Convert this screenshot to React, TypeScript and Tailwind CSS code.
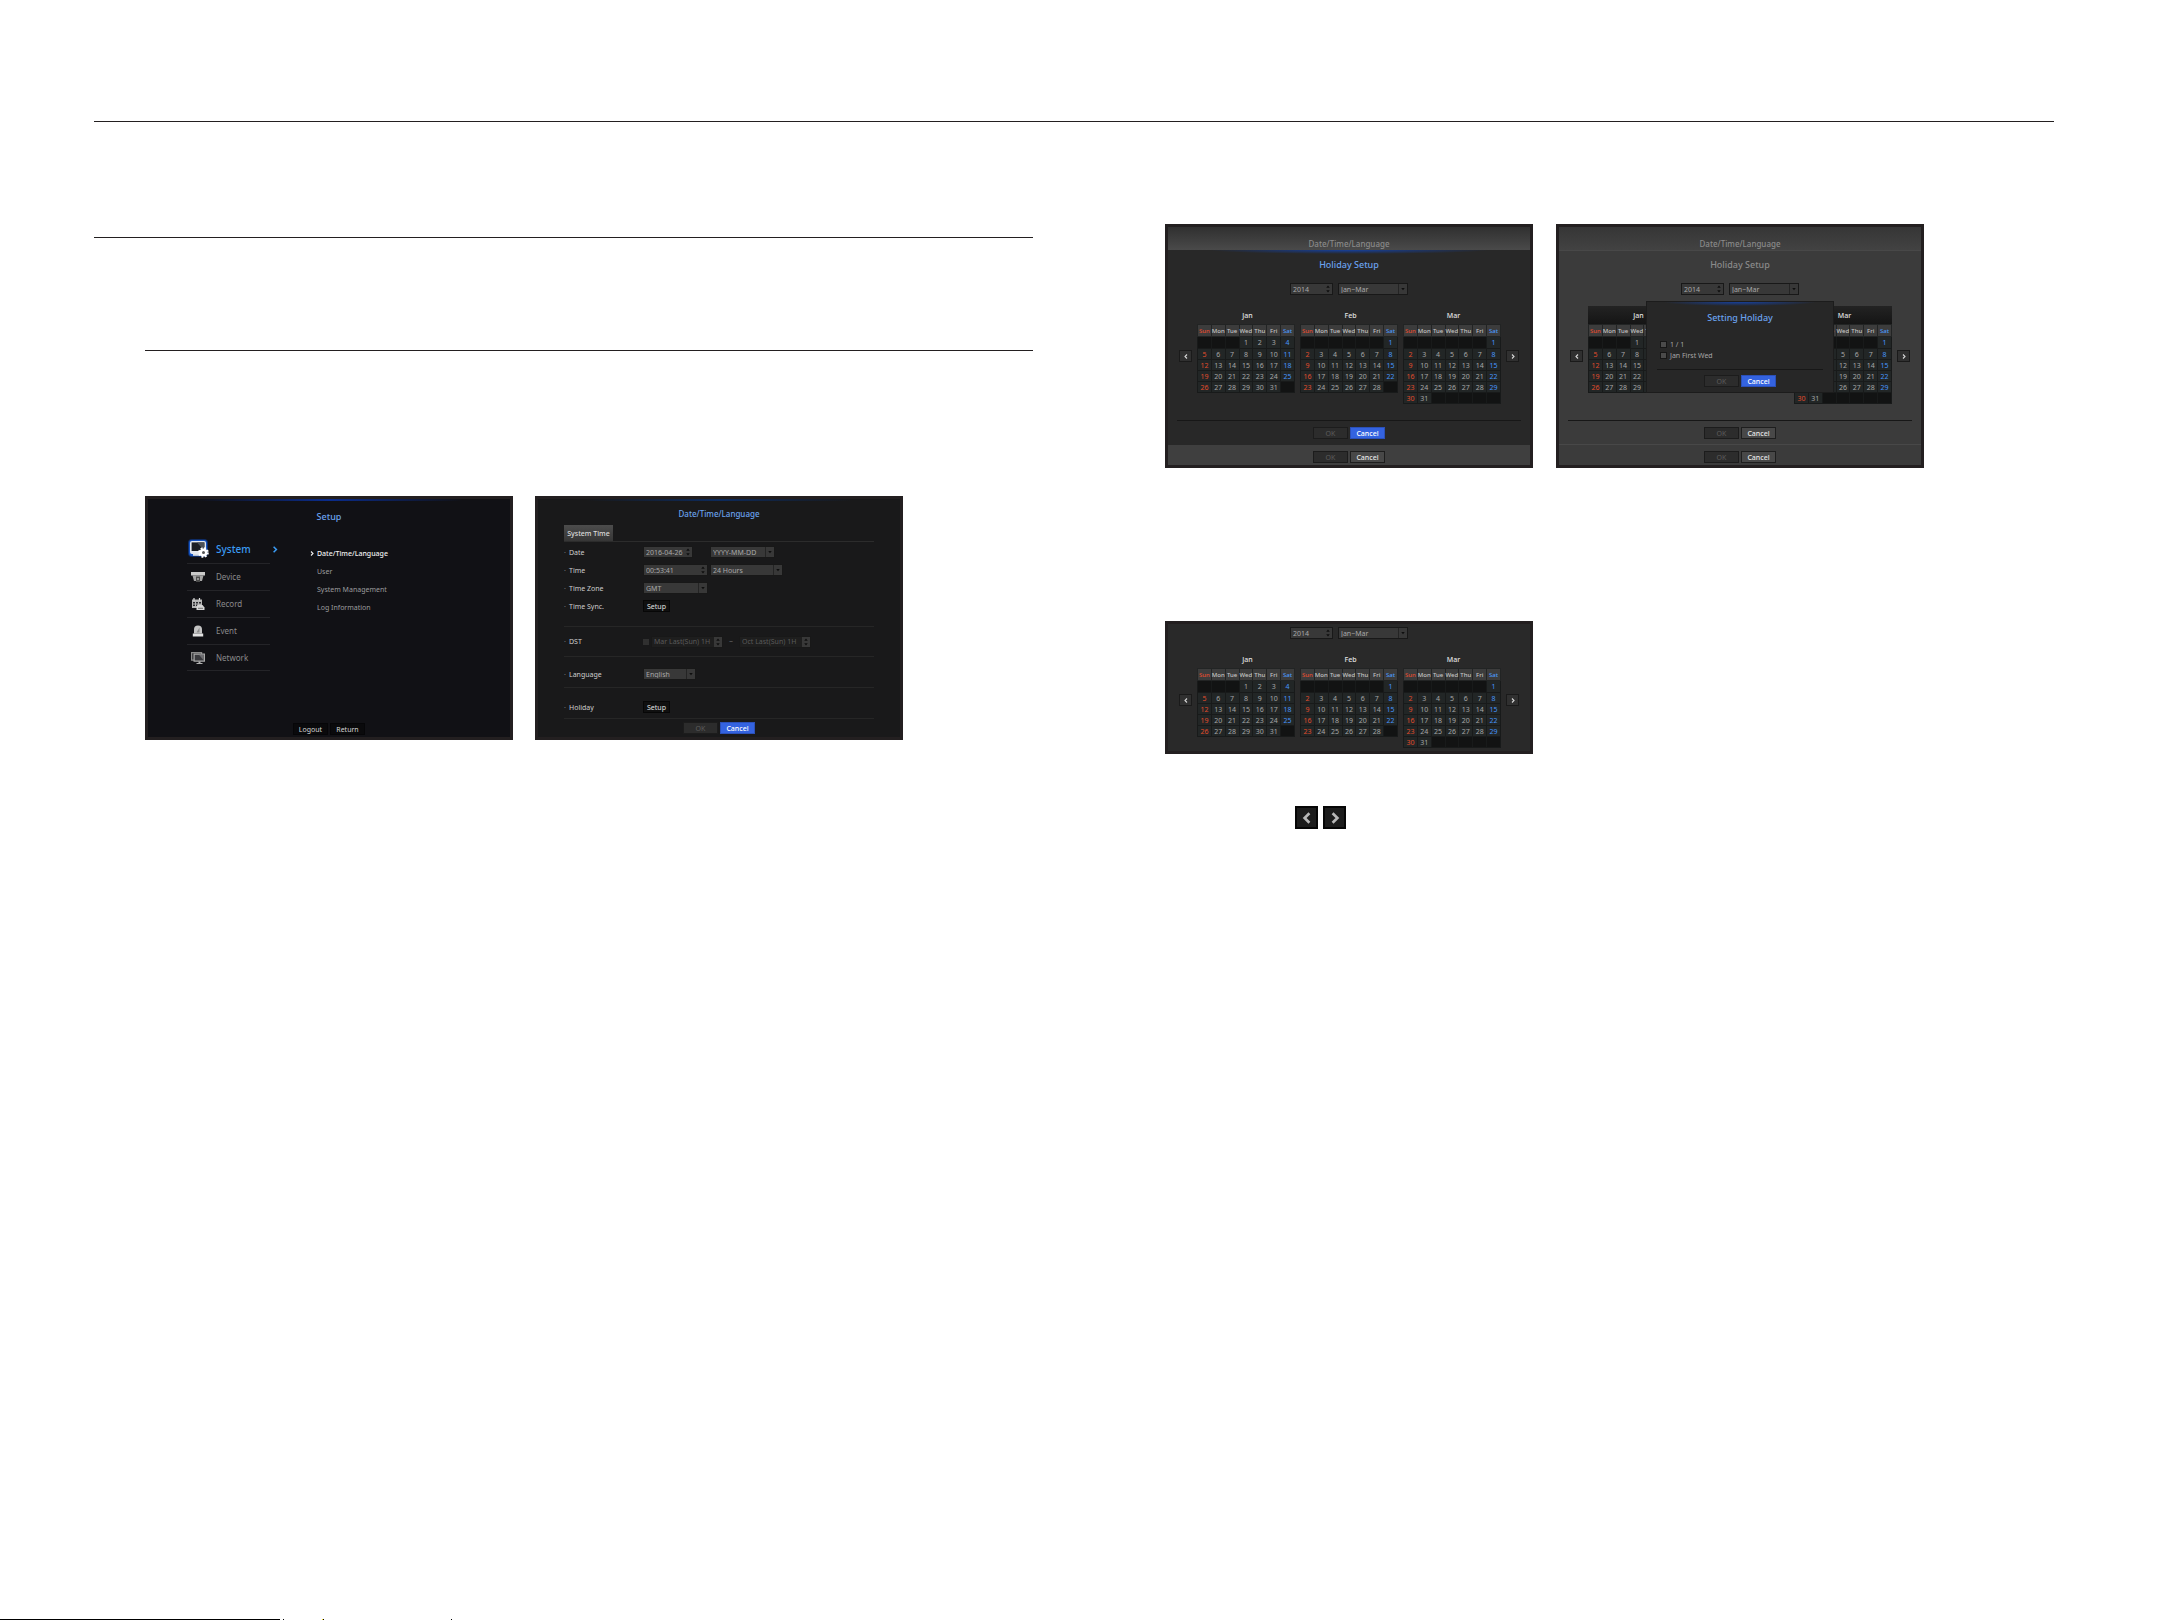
import { useId } from "react";
import type { ReactNode } from "react";
import clsx from "clsx";

const DAYS = ["Sun", "Mon", "Tue", "Wed", "Thu", "Fri", "Sat"];

const MONTHS = [
  { name: "Jan", start: 3, length: 31 },
  { name: "Feb", start: 6, length: 28 },
  { name: "Mar", start: 6, length: 31 },
];

function weeksOf(start: number, length: number): (number | null)[][] {
  const rows = Math.ceil((start + length) / 7);
  return Array.from({ length: rows }, (_, row) =>
    Array.from({ length: 7 }, (_, col) => {
      const day = row * 7 + col - start + 1;
      return day >= 1 && day <= length ? day : null;
    }),
  );
}

function Chevron({ left = false, className }: { left?: boolean; className?: string }) {
  return (
    <svg viewBox="0 0 8 10" className={className} fill="none" stroke="currentColor" strokeWidth="2.2" aria-hidden="true">
      <path d={left ? "M6 1 2 5l4 4" : "M2 1l4 4-4 4"} />
    </svg>
  );
}

function Rule({ className }: { className?: string }) {
  return <hr className={clsx("h-px border-0 bg-[#231f20]", className)} />;
}

function Panel({ label, className, children }: { label: string; className?: string; children: ReactNode }) {
  return (
    <section
      aria-label={label}
      className={clsx("flex w-[368px] flex-col overflow-hidden border-3 border-[#231f20] text-[7px] leading-none", className)}
    >
      {children}
    </section>
  );
}

function SmallButton({ tone = "dark", children }: { tone?: "dark" | "off" | "blue" | "gray"; children: ReactNode }) {
  return (
    <button
      type="button"
      className={clsx(
        "flex h-3 w-[35px] items-center justify-center border text-[7px] leading-none",
        tone === "dark" && "border-[#060608] bg-[#0a0a0c] text-[#d4d4d4]",
        tone === "off" && "border-[#1c1c1c] bg-[#2c2c2c] text-[#5c5c5c]",
        tone === "blue" && "border-[#2b50b8] bg-[#3463e0] font-medium text-white",
        tone === "gray" && "border-[#1e1e1e] bg-[#484848] font-medium text-[#e6e6e6]",
      )}
    >
      {children}
    </button>
  );
}

function SpinField({ label, value, className, disabled = false }: { label: string; value: string; className: string; disabled?: boolean }) {
  return (
    <div
      className={clsx(
        "flex h-3 items-center border border-[#181818] pl-0.5",
        disabled ? "bg-[#1e1e1e] text-[#5a5a5a]" : "bg-[#383838] text-[#a8a8a8]",
        className,
      )}
    >
      <input
        aria-label={label}
        defaultValue={value}
        disabled={disabled}
        className="h-full w-0 min-w-0 flex-1 bg-transparent text-[7px] leading-none outline-none"
      />
      <svg viewBox="0 0 9 11" className={clsx("h-full w-2", disabled && "bg-[#383838]")} fill="#0e0e0e" aria-hidden="true">
        <path d="M2.500 4 4.500 1.500 6.500 4zM2.500 7h4L4.500 9.500z" />
      </svg>
    </div>
  );
}

function SelectField({ id, label, value, className }: { id?: string; label: string; value: string; className: string }) {
  return (
    <div className={clsx("relative h-3 border border-[#181818] bg-[#383838] text-[#a8a8a8]", className)}>
      <select id={id} aria-label={label} className="block h-full w-full appearance-none bg-transparent pl-0.5 text-[7px] leading-none outline-none">
        <option>{value}</option>
      </select>
      <svg viewBox="0 0 9 10" className="pointer-events-none absolute inset-y-0 right-0 h-full w-[9px] border-l border-[#242424]" fill="#0e0e0e" aria-hidden="true">
        <path d="M2.500 4h4L4.500 6.500z" />
      </svg>
    </div>
  );
}

function Title({ dim = false, small = false, className, children }: { dim?: boolean; small?: boolean; className?: string; children: ReactNode }) {
  return (
    <h2
      className={clsx(
        "text-center leading-3 font-medium",
        small ? "text-[8px]" : "text-[9px]",
        dim ? "text-[#8a8a8a]" : "text-[#6aa2ee]",
        className,
      )}
    >
      {children}
    </h2>
  );
}

/* ---------- Setup menu ---------- */

function SystemIcon() {
  return (
    <svg viewBox="0 0 24 22" className="h-[22px] w-6" aria-hidden="true">
      <rect x="1" y="1" width="20" height="18" rx="4" fill="#0d3f9c" opacity="0.600" />
      <rect x="2" y="2" width="18" height="16" rx="3" fill="#1554c4" />
      <rect x="3" y="3" width="16" height="13" rx="2" fill="#e4e8ee" />
      <rect x="4.600" y="4.400" width="12.800" height="8.600" fill="#1b1e22" />
      <path d="M10 4.400h7.400V13z" fill="#4c5158" />
      <path d="M6 16h9v1.800H6z" fill="#d9dde2" />
      <circle cx="16.500" cy="14.500" r="4.300" fill="none" stroke="#fff" strokeWidth="2" strokeDasharray="1.900 1.480" />
      <circle cx="16.500" cy="14.500" r="2.700" fill="#555" stroke="#fff" strokeWidth="2.400" />
    </svg>
  );
}

function DeviceIcon() {
  return (
    <svg viewBox="0 0 14 12" className="h-3 w-[14px]" aria-hidden="true">
      <path d="M0 1h14v3.500H0z" fill="#c9c9c9" />
      <path d="M1.500 4.500h11L11 10H9V7H5v3H3z" fill="#a4a4a4" />
      <path d="M5 5.500h4V11H5z" fill="#4a4a4a" />
      <path d="M6.500 7h1v2h-1z" fill="#ddd" />
    </svg>
  );
}

function RecordIcon() {
  return (
    <svg viewBox="0 0 14 12" className="h-3 w-[14px]" aria-hidden="true">
      <path d="M1 1.500h10V10H1z" fill="#b5b5b5" />
      <path d="M3 0v2.500M8.500 0v2.500" stroke="#ddd" strokeWidth="1.200" />
      <path d="M2 4h2v1.500H2zM5 4h2v1.500H5zM8 4h2v1.500H8zM2 6.500h2V8H2zM5 6.500h1.500V8H5z" fill="#2c2c30" />
      <path d="M6.500 7h5l2 2.500V12H5.500V9z" fill="#d6d6d6" />
      <path d="M7 10.300h5" stroke="#555" strokeWidth="0.800" />
    </svg>
  );
}

function EventIcon() {
  return (
    <svg viewBox="0 0 14 12" className="h-3 w-[14px]" aria-hidden="true">
      <path d="M3 8.500V4.500a4 4 0 0 1 8 0v4z" fill="#c4c4c4" />
      <path d="M5.500 7.500 8.500 2.500v5z" fill="#8c8c8c" />
      <path d="M1.800 8.500h10.400v3H1.800z" fill="#e2e2e2" />
    </svg>
  );
}

function NetworkIcon() {
  return (
    <svg viewBox="0 0 14 12" className="h-3 w-[14px]" aria-hidden="true">
      <path d="M.6.600h10v7.500H.6z" fill="#2c2c30" stroke="#8a8a8a" strokeWidth="1.200" />
      <path d="M3.100 2.100h10.300v7H3.100z" fill="#3a3a3e" stroke="#a8a8a8" strokeWidth="1.200" />
      <path d="M8 2.700h4.800v5.800z" fill="#6e6e72" />
      <path d="M7.500 9.500h2V11h2v1h-6v-1h2z" fill="#b0b0b0" />
    </svg>
  );
}

const CATEGORIES = [
  { name: "Device", icon: <DeviceIcon /> },
  { name: "Record", icon: <RecordIcon /> },
  { name: "Event", icon: <EventIcon /> },
  { name: "Network", icon: <NetworkIcon /> },
];

function SetupPanel() {
  return (
    <Panel label="Setup" className="h-[244px] bg-[#111115]">
      <div className="mx-12 h-0.5 bg-linear-to-r from-transparent via-[#0a2c8c] to-transparent" />
      <Title className="mt-2.5">Setup</Title>
      <div className="mt-3 flex flex-1">
        <nav aria-label="Categories" className="ml-[39px] w-[91px]">
          <a href="#system" className="flex h-[28px] items-center text-[#3a9bf4]">
            <span className="flex w-[29px] justify-start"><SystemIcon /></span>
            <span className="text-[10px] font-medium">System</span>
            <Chevron className="ml-auto h-[7px] w-[6px]" />
          </a>
          <ul className="w-[83px]">
            {CATEGORIES.map((c) => (
              <li key={c.name} className="h-[27px] border-t border-[#242428] last:border-b">
                <a href={`#${c.name.toLowerCase()}`} className="flex h-full items-center text-[8px] text-[#8a8a8c]">
                  <span className="flex w-[29px] justify-start pl-1">{c.icon}</span>
                  {c.name}
                </a>
              </li>
            ))}
          </ul>
        </nav>
        <ul className="mt-[9px] ml-8 text-[#9c9c9e]">
          {["Date/Time/Language", "User", "System Management", "Log Information"].map((name, i) => (
            <li key={name} className={clsx("flex h-[18px] items-center", i === 0 && "font-medium text-[#f0f0f0]")}>
              <span className="w-[7px]">{i === 0 && <Chevron className="h-[5px] w-1" />}</span>
              <a href="#item">{name}</a>
            </li>
          ))}
        </ul>
      </div>
      <div className="mb-0.5 flex justify-center gap-0.5">
        <SmallButton>Logout</SmallButton>
        <SmallButton>Return</SmallButton>
      </div>
    </Panel>
  );
}

/* ---------- Date / time form ---------- */

function FormRow({ label, className, children }: { label: string; className: string; children: ReactNode }) {
  const id = useId();
  return (
    <div role="group" aria-labelledby={id} className={clsx("flex items-center", className)}>
      <span className="w-[5px] text-[#777]">·</span>
      <span id={id} className="w-[74px] text-[#cdcdcd]">{label}</span>
      {children}
    </div>
  );
}

function DateTimePanel() {
  return (
    <Panel label="Date/Time/Language" className="h-[244px] bg-[#19191a]">
      <div className="mx-12 h-0.5 bg-linear-to-r from-transparent via-[#0c2a5c] to-transparent" />
      <Title small className="mt-[7px]">Date/Time/Language</Title>
      <form className="mx-[26px] mt-[5px] flex-1">
        <div className="border-b border-[#2c2c2c]">
          <button type="button" className="flex h-4 w-[49px] items-center justify-center bg-linear-to-b from-[#4c4c4c] to-[#363636] font-medium text-[#dcdcdc]">
            System Time
          </button>
        </div>
        <FormRow label="Date" className="mt-px h-[18px]">
          <SpinField label="Date" value="2016-04-26" className="w-[50px]" />
          <SelectField label="Date format" value="YYYY-MM-DD" className="ml-[17px] w-[65px]" />
        </FormRow>
        <FormRow label="Time" className="h-[18px]">
          <SpinField label="Time" value="00:53:41" className="w-[65px]" />
          <SelectField label="Hour format" value="24 Hours" className="ml-0.5 w-[73px]" />
        </FormRow>
        <FormRow label="Time Zone" className="h-[18px]">
          <SelectField label="Time zone" value="GMT" className="w-[65px]" />
        </FormRow>
        <FormRow label="Time Sync." className="h-[18px]">
          <button type="button" className="h-3 w-[27px] border border-[#070707] bg-[#101010] text-[#e0e0e0]">Setup</button>
        </FormRow>
        <FormRow label="DST" className="mt-[11px] h-[30px] border-t border-[#262626]">
          <input type="checkbox" aria-label="Use daylight saving time" className="h-[6px] w-[6px] appearance-none bg-[#303030]" />
          <SpinField label="Start of daylight saving time" value="Mar Last(Sun) 1H" className="ml-0.5 w-[72px]" disabled />
          <span className="w-4 text-center text-[#777]">~</span>
          <SpinField label="End of daylight saving time" value="Oct Last(Sun) 1H" className="w-[72px]" disabled />
        </FormRow>
        <FormRow label="Language" className="h-[31px] border-t border-[#262626] pt-1">
          <SelectField label="Language" value="English" className="w-[53px]" />
        </FormRow>
        <FormRow label="Holiday" className="h-[32px] border-y border-[#262626] pt-2">
          <button type="button" className="h-3 w-[27px] border border-[#070707] bg-[#101010] text-[#e0e0e0]">Setup</button>
        </FormRow>
      </form>
      <div className="mb-[3px] flex justify-center gap-0.5">
        <SmallButton tone="off">OK</SmallButton>
        <SmallButton tone="blue">Cancel</SmallButton>
      </div>
    </Panel>
  );
}

/* ---------- Holiday calendar ---------- */

function MonthTable({ name, start, length, barred }: { name: string; start: number; length: number; barred: boolean }) {
  return (
    <table className="w-[98px] table-fixed border-collapse self-start text-center">
      <caption className={clsx("h-[18px] pt-1.5 pl-[3px] font-medium text-[#e4e4e4]", barred && "bg-linear-to-b from-[#232323] to-[#151515]")}>{name}</caption>
      <thead>
        <tr className="h-3">
          {DAYS.map((d) => (
            <th
              key={d}
              scope="col"
              className={clsx(
                "border border-[#222424] bg-[#3c3c3c] p-0 text-[6px] font-medium",
                d === "Sun" ? "text-[#e04c30]" : d === "Sat" ? "text-[#4a98fa]" : "text-[#c4c4c4]",
              )}
            >
              {d}
            </th>
          ))}
        </tr>
      </thead>
      <tbody>
        {weeksOf(start, length).map((week, row) => (
          <tr key={row} className="h-[11px] first:h-3">
            {week.map((day, col) => (
              <td
                key={col}
                className={clsx(
                  "border border-[#181a1a] p-0",
                  day ? "bg-[#222626]" : "bg-[#121313]",
                  col === 0 ? "text-[#e04c2c]" : col === 6 ? "text-[#4694fa]" : "text-[#a6a6a6]",
                )}
              >
                {day}
              </td>
            ))}
          </tr>
        ))}
      </tbody>
    </table>
  );
}

function PageArrow({ left = false }: { left?: boolean }) {
  return (
    <button
      type="button"
      aria-label={left ? "Previous months" : "Next months"}
      className="mt-[44px] flex h-3 w-[13px] items-center justify-center border border-[#1a1a1a] bg-[#303030] text-[#d8d8d8]"
    >
      <Chevron left={left} className="h-[5px] w-1" />
    </button>
  );
}

function HolidayCalendar({ barred = false }: { barred?: boolean }) {
  return (
    <div>
      <div className="flex justify-center gap-[5px]">
        <SpinField label="Year" value="2014" className="w-[43px]" />
        <SelectField label="Months" value="Jan~Mar" className="w-[70px]" />
      </div>
      <div className={clsx("mt-[11px] flex justify-center", !barred && "gap-[5px]")}>
        <PageArrow left />
        {barred && <span className="w-[5px]" />}
        {MONTHS.map((m, i) => (
          <div key={m.name} className={clsx("flex", barred && i < 2 && "w-[103px]")}>
            <MonthTable {...m} barred={barred} />
          </div>
        ))}
        {barred && <span className="w-[5px]" />}
        <PageArrow />
      </div>
    </div>
  );
}

function HolidayPanel({ dimmed = false, children }: { dimmed?: boolean; children?: ReactNode }) {
  return (
    <Panel label="Holiday setup" className={clsx("relative h-[244px]", dimmed ? "bg-[#3b3b3b]" : "bg-[#3f3f3f]")}>
      <div className={clsx("h-[23px] bg-linear-to-b pt-[11px]", dimmed ? "from-[#363636] to-[#424242]" : "from-[#303030] to-[#4a4a4a]")}>
        <Title dim small>Date/Time/Language</Title>
      </div>
      <div className={clsx("flex h-[195px] flex-col", dimmed ? "border-y border-[#484848] bg-[#3b3b3b]" : "bg-[#282828]")}>
        <div className={clsx("mx-10 shrink-0", dimmed ? "h-[3px]" : "h-1 bg-[radial-gradient(ellipse_at_top,#16409c,transparent_70%)]")} />
        <Title dim={dimmed} className="mt-[5px] mb-3">Holiday Setup</Title>
        <div className="h-[137px] shrink-0">
          <HolidayCalendar barred={dimmed} />
        </div>
        <div className="mx-[9px] flex justify-center gap-0.5 border-t border-[#171717] pt-1.5">
          <SmallButton tone="off">OK</SmallButton>
          <SmallButton tone={dimmed ? "gray" : "blue"}>Cancel</SmallButton>
        </div>
      </div>
      <div className="flex flex-1 items-center justify-center gap-0.5 pt-1">
        <SmallButton tone="off">OK</SmallButton>
        <SmallButton tone="gray">Cancel</SmallButton>
      </div>
      {children}
    </Panel>
  );
}

function HolidayDialog() {
  return (
    <div role="dialog" aria-label="Setting Holiday" className="absolute top-[74px] left-[87px] flex h-[92px] w-[188px] flex-col border border-[#1c1c1c] bg-[#272727]">
      <div className="mx-4 h-1 bg-[radial-gradient(ellipse_at_top,#16409c,transparent_70%)]" />
      <Title className="mt-[6px]">Setting Holiday</Title>
      <div className="mx-2.5 mt-[15px] flex-1 pl-[3px] text-[#a6a6a6]">
        {["1 / 1", "Jan First Wed"].map((name) => (
          <label key={name} className="flex h-[11px] items-center gap-[3px]">
            <input type="checkbox" className="h-[7px] w-[7px] appearance-none border border-[#161616] bg-[#4a4a4a]" />
            {name}
          </label>
        ))}
      </div>
      <div className="mx-2.5 mb-[5px] flex justify-center gap-0.5 border-t border-[#171717] pt-[5px]">
        <SmallButton tone="off">OK</SmallButton>
        <SmallButton tone="blue">Cancel</SmallButton>
      </div>
    </div>
  );
}

export default function App() {
  return (
    <div className="flex min-h-screen flex-col bg-white font-['Noto_Sans',sans-serif]">
      <main className="mr-[114px] ml-[94px] flex-1 pt-[121px]">
        <Rule />
        <div className="grid grid-cols-[939fr_889fr] gap-x-[132px]">
          <div>
            <Rule className="mt-[115px]" />
            <div className="ml-[51px]">
              <Rule className="mt-28" />
              <div className="mt-[145px] flex flex-wrap gap-[22px]">
                <SetupPanel />
                <DateTimePanel />
              </div>
            </div>
          </div>
          <div className="pt-[102px]">
            <div className="flex flex-wrap gap-[23px]">
              <HolidayPanel />
              <HolidayPanel dimmed>
                <HolidayDialog />
              </HolidayPanel>
            </div>
            <Panel label="Holiday calendar" className="mt-[153px] h-[133px] bg-[#292929] pt-[3px]">
              <HolidayCalendar />
            </Panel>
            <div className="mt-[52px] ml-[130px] flex gap-[5px]">
              {[true, false].map((left) => (
                <button
                  key={String(left)}
                  type="button"
                  aria-label={left ? "Previous" : "Next"}
                  className="flex h-[23px] w-[23px] items-center justify-center border-2 border-[#060606] bg-[#1c1c1c] text-[#b8b8b8]"
                >
                  <Chevron left={left} className="h-3 w-2.5" />
                </button>
              ))}
            </div>
          </div>
        </div>
      </main>
      <footer className="flex h-px">
        <div className="w-[280px] bg-black" />
        <div className="ml-[3px] w-px bg-black" />
        <div className="ml-[38px] w-px bg-yellow-300" />
        <div className="w-px bg-black" />
        <div className="ml-[127px] w-px bg-black" />
      </footer>
    </div>
  );
}
